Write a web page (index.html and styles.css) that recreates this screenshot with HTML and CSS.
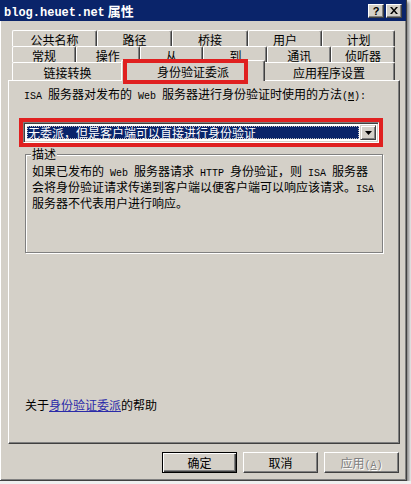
FILE: index.html
```html
<!DOCTYPE html>
<html lang="zh-CN">
<head>
    <meta charset="UTF-8">
    <title>blog.heuet.net 属性</title>
    <link rel="stylesheet" href="styles.css">
</head>
<body>

<div class="window">

    <!-- Barre de titre -->
    <div class="titlebar">
        <span class="title"><span class="title-en">blog.heuet.net</span> 属性</span>
        <div class="title-btns">
            <span class="tbtn">?</span>
            <span class="tbtn"><svg width="8" height="7" viewBox="0 0 8 7"><path d="M0 0h2l2 2.4L6 0h2L5 3.5 8 7H6L4 4.6 2 7H0l3-3.5z" fill="#000"/></svg></span>
        </div>
    </div>

    <!-- Onglets -->
    <div class="tabs">
        <div class="tab-row row1">
            <div class="tab">公共名称</div>
            <div class="tab">路径</div>
            <div class="tab">桥接</div>
            <div class="tab">用户</div>
            <div class="tab">计划</div>
        </div>
        <div class="tab-row row2">
            <div class="tab">常规</div>
            <div class="tab">操作</div>
            <div class="tab">从</div>
            <div class="tab">到</div>
            <div class="tab">通讯</div>
            <div class="tab">侦听器</div>
        </div>
        <div class="tab-row row3">
            <div class="tab">链接转换</div>
            <div class="tab active">身份验证委派</div>
            <div class="tab">应用程序设置</div>
        </div>
    </div>

    <div class="panel">
        <label class="field-label"><span class="en">ISA </span>服务器对发布的<span class="en"> Web </span>服务器进行身份验证时使用的方法<span class="en">(<u>M</u>):</span></label>

        <div class="combo">
            <div class="combo-value"><span>无委派，但是客户端可以直接进行身份验证</span></div>
            <div class="combo-btn"><svg width="7" height="4" viewBox="0 0 7 4"><path d="M0 0h7L3.5 4z" fill="#000"/></svg></div>
        </div>

        <fieldset class="group">
            <legend>描述</legend>
            <p class="desc">如果已发布的<span class="en"> Web </span>服务器请求<span class="en"> HTTP </span>身份验证，则<span class="en"> ISA </span>服务器<br>会将身份验证请求传递到客户端以便客户端可以响应该请求。<span class="en">ISA</span><br>服务器不代表用户进行响应。</p>
        </fieldset>

        <p class="help">关于<a href="#">身份验证委派</a>的帮助</p>
    </div>

    <div class="buttons">
        <button class="btn default">确定</button>
        <button class="btn">取消</button>
        <button class="btn" disabled>应用<span class="en">(<u>A</u>)</span></button>
    </div>

    <!-- cadre rouge d'annotation -->
    <div class="mark mark-tab"></div>
</div>

</body>
</html>
```

FILE: styles.css
```css
* { box-sizing: border-box; }
body {
    margin: 0;
    background: #efefef;
    font-family: "Noto Sans CJK SC", sans-serif;
    font-size: 12px;
    color: #000;
}
.en { font-family: "Liberation Mono", monospace; font-size: 10px; }

.window {
    position: relative;
    width: 407px;
    height: 481px;
    background: #d4d0c8;
    border-right: 1px solid #404040;
    border-bottom: 1px solid #404040;
    box-shadow: inset 1px 0 #fff, inset -1px -1px #808080, 2px 2px 3px rgba(0, 0, 0, .45);
}

.titlebar {
    height: 21px;
    background: #0a246a;
    color: #fff;
    display: flex;
    align-items: center;
    justify-content: space-between;
    padding: 0 4px 0 4px;
}
.title { font-weight: bold; font-size: 13px; white-space: nowrap; }
.title-en { font-family: "Liberation Mono", monospace; font-size: 12px; }
.title-btns { display: flex; gap: 2px; }
.tbtn {
    width: 16px;
    height: 14px;
    background: #d4d0c8;
    color: #000;
    border-top: 1px solid #fff;
    border-left: 1px solid #fff;
    border-right: 1px solid #404040;
    border-bottom: 1px solid #404040;
    box-shadow: inset -1px -1px #808080;
    display: flex;
    align-items: center;
    justify-content: center;
    font: bold 11px "Liberation Sans", sans-serif;
}

.tabs { margin: 9px 0 0 12px; width: 383px; }
.tab-row { display: grid; height: 16px; align-items: start; }
.row1 { grid-template-columns: 85px 75px 76px 74px 1fr; }
.row2 { grid-template-columns: repeat(6, 1fr); }
.row3 { height: 18px; grid-template-columns: 111px 140px 1fr; }
.tab {
    height: 16px;
    background: #d4d0c8;
    border-top: 1px solid #fff;
    border-left: 1px solid #fff;
    border-right: 1px solid #404040;
    box-shadow: inset -1px 0 #808080;
    border-radius: 2px 2px 0 0;
    text-align: center;
    padding-top: 2px;
    line-height: 14px;
    white-space: nowrap;
}
.row3 .tab { height: 18px; padding-top: 3px; }
.row3 .tab.active {
    position: relative;
    z-index: 1;
    height: 21px;
    margin: -2px -2px 0;
    padding-top: 4px;
}

.panel {
    margin-left: 8px;
    width: 392px;
    height: 364px;
    border-top: 1px solid #fff;
    border-left: 1px solid #fff;
    border-right: 1px solid #404040;
    border-bottom: 1px solid #404040;
    box-shadow: inset -1px -1px #808080;
    padding: 6px 15px 0;
    display: flex;
    flex-direction: column;
    align-items: flex-start;
}
.field-label { display: block; line-height: 14px; white-space: nowrap; }

.combo {
    margin: 18px 0 0 -1px;
    width: 356px;
    height: 21px;
    display: flex;
    background: #fff;
    border-top: 1px solid #808080;
    border-left: 1px solid #808080;
    border-right: 1px solid #fff;
    border-bottom: 1px solid #fff;
    box-shadow: inset 1px 1px #404040, inset -1px -1px #d4d0c8;
    padding: 2px;
    outline: 4px solid #e02020;
}
.combo-value {
    flex: 1;
    margin: 1px;
    background: #0a246a;
    color: #fff;
    line-height: 13px;
    padding-left: 1px;
    outline: 1px dotted #c0c0c0;
    outline-offset: -1px;
    white-space: nowrap;
}
.combo-btn {
    width: 16px;
    background: #d4d0c8;
    border-top: 1px solid #d4d0c8;
    border-left: 1px solid #d4d0c8;
    border-right: 1px solid #404040;
    border-bottom: 1px solid #404040;
    box-shadow: inset 1px 1px #fff, inset -1px -1px #808080;
    display: flex;
    align-items: center;
    justify-content: center;
}

.group {
    margin: 5px 0 0 1px;
    width: 358px;
    border: 1px solid #808080;
    box-shadow: 1px 1px #fff, inset 1px 1px #fff;
    padding: 4px 6px 0;
    min-width: 0;
}
.group legend {
    padding: 0 1px;
    margin-left: -1px;
    line-height: 12px;
    background: #d4d0c8;
}
.desc { margin: 0; height: 88px; line-height: 13px; white-space: nowrap; }

.help { margin: auto 0 31px 1px; line-height: 14px; }
.help a { color: #2a2aa8; }

.buttons {
    display: flex;
    justify-content: flex-end;
    gap: 6px;
    margin-top: 8px;
    padding-right: 7px;
}
.btn {
    width: 75px;
    height: 21px;
    padding: 0;
    font-family: "Noto Sans CJK SC", sans-serif;
    font-size: 12px;
    color: #000;
    background: #d4d0c8;
    border-top: 1px solid #fff;
    border-left: 1px solid #fff;
    border-right: 1px solid #404040;
    border-bottom: 1px solid #404040;
    box-shadow: inset -1px -1px #808080;
}
.btn.default {
    border: 1px solid #000;
    box-shadow: inset 1px 1px #fff, inset -1px -1px #404040, inset -2px -2px #808080;
}
.btn:disabled { color: #808080; text-shadow: 1px 1px #fff; }

.mark {
    position: absolute;
    z-index: 2;
    border: 4px solid #e02020;
}
.mark-tab { left: 123px; top: 59px; width: 125px; height: 25px; }
```
